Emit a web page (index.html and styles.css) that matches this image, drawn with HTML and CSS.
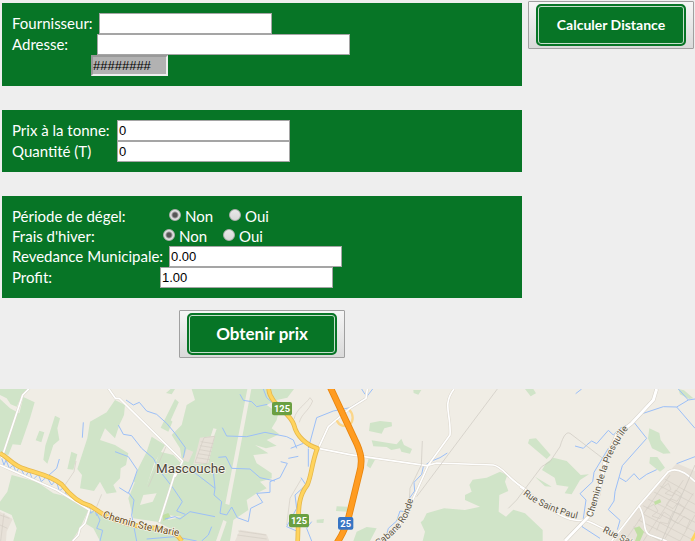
FILE: index.html
```html
<!DOCTYPE html>
<html lang="fr">
<head>
<meta charset="utf-8">
<meta name="viewport" content="width=device-width, initial-scale=1">
<title>Calcul du prix</title>
<link rel="stylesheet" href="styles.css">
</head>
<body>
<form class="page">
  <div class="sections">
    <section class="panel">
      <div class="row"><label class="w-m" for="fournisseur">Fournisseur:</label><input class="field" id="fournisseur" type="text"></div>
      <div class="row"><label class="w-s" for="adresse">Adresse:</label><input class="field field-wide" id="adresse" type="text"></div>
      <div class="row"><span class="w-xs"></span><input class="field field-disabled" type="text" value="########" aria-label="Distance" disabled></div>
    </section>
    <section class="panel">
      <div class="row"><label class="w-l" for="prix">Prix à la tonne:</label><input class="field" id="prix" type="text" value="0"></div>
      <div class="row"><label class="w-l" for="quantite">Quantité (T)</label><input class="field" id="quantite" type="text" value="0"></div>
    </section>
    <section class="panel">
      <div class="row choices"><span class="w-xxl">Période de dégel:</span>
        <label><input type="radio" name="degel" checked>Non</label><label><input type="radio" name="degel">Oui</label></div>
      <div class="row choices"><span class="w-radio">Frais d'hiver:</span>
        <label><input type="radio" name="hiver" checked>Non</label><label><input type="radio" name="hiver">Oui</label></div>
      <div class="row"><label class="w-xxl" for="redevance">Revedance Municipale:</label><input class="field" id="redevance" type="text" value="0.00"></div>
      <div class="row"><label class="w-xl" for="profit">Profit:</label><input class="field" id="profit" type="text" value="1.00"></div>
    </section>
    <button class="action action-large" type="button"><span>Obtenir prix</span></button>
  </div>
  <button class="action" type="button"><span>Calculer Distance</span></button>
</form>
<div class="map">
<svg viewBox="0 12 2085 456" preserveAspectRatio="xMinYMin slice" role="img" aria-label="Carte de Mascouche">
  <rect class="land" y="0" width="2085" height="480"/>
  <g class="wood">
    <path d="M0 12H85L62 40 50 65 32 58 20 40 0 30ZM0 42L30 70 58 85 70 36 104 52 90 100 76 140 62 180 38 178 25 210 0 204Z"/>
    <path d="M165 92L180 100 172 130 178 165 160 180 142 236 130 224 136 182 150 140ZM118 137L133 142 124 172 107 166ZM214 200L232 208 220 254 202 252Z"/>
    <path d="M270 110L320 82 345 45 375 60 372 90 358 120 345 160 315 130 300 165 345 180 385 205 378 240 362 250 360 280 340 300 350 322 320 326 300 290 282 318 240 310 246 270 232 252 262 160Z"/>
    <path d="M512 12H525L515 28 498 24ZM525 42L540 55 505 140 482 128ZM455 155L495 180 462 236 440 304 400 290 415 250 440 200Z"/>
    <path d="M35 270L110 290 160 325 205 336 265 375 240 430 215 468H40L50 430 35 390 0 374V350L22 320Z"/>
    <path d="M268 375L330 400 400 420 470 435 520 450 540 468H300L280 430 255 415Z"/>
    <path d="M575 12H882L862 38 830 45 800 60 835 85 830 105 815 130 838 148 800 165 830 182 798 190 765 180 805 205 760 210 770 235 815 265 815 280 780 290 800 310 770 325 740 345 745 375 700 405 690 468H540L520 435 470 410 400 400 385 340 405 290 440 300 480 200 520 210 548 240 540 190 515 150 545 120 560 60 585 45Z"/>
    <path d="M1250 0"/>
  </g>
  <g class="wood" transform="translate(1050)">
    <path d="M190 15H214L205 29 191 24ZM60 114L90 108 125 112 126 124 103 130 95 146 57 138ZM65 166L116 174 140 178 154 161 162 180 186 192 180 206 154 200 150 190 124 195 110 186 70 184ZM56 220L75 224 61 250 50 242ZM-40 364L-8 365V380L-42 378ZM-100 404L-78 402-80 414-100 413Z"/>
    <path d="M368 284L410 278 450 260 472 270 465 290 475 318 448 330 446 380 468 395 490 374 525 385 578 435V468H218L225 440 212 412 220 405 230 385 282 370 345 375 390 365 345 345 345 330 365 320 358 300ZM10 468L20 440 50 426 80 430 60 468Z"/>
  </g>
  <g class="wood" transform="translate(1560)">
    <path d="M15 12H40L48 25 32 34ZM475 12L492 16 520 40 508 42 480 28ZM28 162L48 160 92 210 80 222 24 175ZM78 235L100 218 140 228 182 270 207 268 180 285 155 328 134 325 146 305 110 300 104 278 66 255ZM45 275L95 305 75 304ZM388 130L418 144 422 165 452 205 430 206 396 190 384 160ZM390 216L412 216 435 248 420 260 388 235Z"/>
  </g>
  <g class="clearing">
    <path d="M742 12H754L688 360 676 356ZM640 130L650 132 632 180 624 178ZM538 48L548 52 520 112 512 106ZM430 330L470 325 458 350 420 360ZM500 390L545 395 505 405ZM670 405L680 410 660 468H648Z"/>
  </g>
  <g class="town">
    <path d="M600 158L645 152 625 235 580 238ZM560 192L580 200 565 232 548 225ZM0 380L38 402 20 440 18 468H0ZM720 434L800 448 808 468H705Z"/>
    <path d="M1845 468L1920 360 2012 255 2030 235 2085 258V468Z"/>
  </g>
  <g class="streets">
    <path d="M602 170L640 176M600 182L638 188M598 194L635 200M594 206L632 212M590 218L630 224M612 158L585 232 620 236 644 154ZM0 390L28 400M0 420L22 430M12 385L2 468M715 438L798 450M712 450L800 462M882 102C890 70 915 60 930 38L938 48C925 80 905 85 898 112"/>
    <path d="M498 185L445 305M305 328L290 365M228 228L222 260 195 300M905 280L870 340 860 420"/>
  </g>
  <clipPath id="suburb"><path d="M1850 468L1925 365 2015 260 2085 268V468Z"/></clipPath>
  <g class="streets" clip-path="url(#suburb)">
    <path d="M1990 280L2080 330M1975 300L2085 358M1960 320L2085 384M1940 340L2085 412M1925 360L2085 440M1920 382L2085 468M1915 405L2040 468M1900 425L1980 468"/>
    <path d="M2010 270L1880 460M2050 285L1930 468M2080 325L1990 468M2085 390L2040 468"/>
    <path d="M1985 310l20-15 8 18-18 12 22 8 10-18 18 12-14 22-20-8-12 18 20 12 15-18 20 15-12 20-22-8-10 20 24 16 18-22 18 12-12 28M1940 370l22-12 12 20-18 15 24 8 12-20 20 14-8 22-24-6-10 25"/>
  </g>
  <path class="park" d="M1962 350L1980 342 1984 352 1965 360ZM1902 430L1918 424 1932 440 1920 468H1905L1912 450ZM488 390L505 384 512 395 490 408Z"/>
  <g class="river">
    <path d="M378 45L400 60 418 52 440 78 470 88 500 115 525 145 556 188 550 218M355 120L370 148 395 152 425 190 460 220 485 265 520 310 547 350 530 378 556 388M345 200L385 215 412 255 400 290 385 325 358 308M385 322L402 345 395 390 410 468M247 158L250 112M178 222L170 250 145 272M290 385L300 405 290 430 308 436 300 468M440 462L525 455 590 468M495 402L525 395 540 402 570 380 645 395"/>
    <path class="creek" d="M5 220L12 240 18 225 28 250 40 240 48 262 60 245 75 275 88 258 98 285 115 268 124 290 140 275 155 300 168 285 178 318 195 304 198 330M245 355L260 370 268 360 272 385 285 375 290 392"/>
    <path d="M720 28L730 46 755 50 770 65 802 58M790 12L800 38 825 60M667 128L680 153 740 155 795 142 860 155 880 165 890 190M655 217L678 215 695 250 750 252 780 278 825 288M580 260L645 310 642 330 665 350 660 385 680 390 695 366 712 398 745 410 752 370 788 352 770 325 810 322 810 290 840 278 862 235 842 230M640 260L645 310M635 425L625 450 605 468M865 220L895 214M903 278L918 300 885 330 890 370 860 425 890 438M935 410L920 430 935 468M872 190L910 175M925 192L925 245M925 190L950 98 1000 78 1050 68"/>
  </g>
  <g class="river" transform="translate(1050)">
    <path d="M0 68L48 38 68 12M35 12L45 28M292 204L270 218 240 230 220 245 215 268 192 292 194 318 178 340 165 380 150 378 140 408 115 430 108 455 88 468"/>
  </g>
  <g class="river" transform="translate(1560)">
    <path d="M167 26L185 12M475 12L505 45 525 42M370 85L430 65 470 66 525 130M470 66L505 45M165 183L190 190 200 180 215 168 230 176 265 136 280 150 300 130 342 112 380 160 307 242 285 320 282 348 265 374 300 406 292 434M298 278L318 290 342 266 358 284 380 268 410 254M265 190L222 262 218 290 180 326 198 345 190 400 186 425 240 460M470 236L525 215"/>
  </g>
  <g class="minor-edge">
    <path d="M88 10L68 30 5 220M325 10L346 40 358 40 525 205M0 240L170 315 268 375 255 415 240 430 235 450 218 468M525 265L478 412M525 205L548 228 525 275M955 190L985 125 1050 70 1098 40 1102 12M955 190L1050 209 1280 242 1310 234 1480 240C1510 245 1520 280 1580 315M1362 12C1325 60 1355 90 1350 150L1285 240 1240 340C1220 400 1190 435 1145 468"/>
    <path d="M1560 305C1640 360 1690 415 1750 405 1790 415 1805 435 1840 440M1835 468L1915 365 2005 260C2030 245 2060 265 2085 290M1918 365C1940 400 1925 440 1950 450L2000 468"/>
  </g>
  <g class="minor">
    <path d="M88 10L68 30 5 220M325 10L346 40 358 40 525 205M0 240L170 315 268 375 255 415 240 430 235 450 218 468M525 265L478 412M525 205L548 228 525 275M955 190L985 125 1050 70 1098 40 1102 12M955 190L1050 209 1280 242 1310 234 1480 240C1510 245 1520 280 1580 315M1362 12C1325 60 1355 90 1350 150L1285 240 1240 340C1220 400 1190 435 1145 468"/>
    <path d="M1560 305C1640 360 1690 415 1750 405 1790 415 1805 435 1840 440M1835 468L1915 365 2005 260C2030 245 2060 265 2085 290M1918 365C1940 400 1925 440 1950 450L2000 468"/>
  </g>
  <path class="avenue-edge" d="M1970 12L1960 45 1895 115 1850 150 1815 230 1795 330 1765 395 1695 468"/>
  <path class="avenue" d="M1970 12L1960 45 1895 115 1850 150 1815 230 1795 330 1765 395 1695 468"/>
  <g class="rail">
    <path d="M1492 12L1250 335M1267 168L1264 240 1230 310 1228 345M1565 325L1625 245 1650 230 1680 185C1690 150 1700 140 1710 145L1815 225M1565 325L1550 345 1525 370M2085 240L1985 468"/>
  </g>
  <g class="major-edge"><path d="M0 205C30 220 35 240 75 252 110 265 150 270 185 298 210 330 240 355 270 362L310 388C350 410 400 425 470 430 520 440 535 450 545 468"/><path d="M806 12C810 60 870 80 882 120 890 155 920 180 952 190 935 235 935 270 922 300 890 340 897 380 893 468"/></g>
  <g class="major"><path d="M0 205C30 220 35 240 75 252 110 265 150 270 185 298 210 330 240 355 270 362L310 388C350 410 400 425 470 430 520 440 535 450 545 468"/><path d="M806 12C810 60 870 80 882 120 890 155 920 180 952 190 935 235 935 270 922 300 890 340 897 380 893 468"/><path d="M2090 440L2075 468"/></g>
  <path class="ramp" d="M1010 106C1020 125 1035 125 1042 118M1048 75C1062 88 1060 110 1050 118"/>
  <path class="highway-edge" d="M990 5L1065 165C1085 205 1088 230 1078 265L1050 380Q1040 430 1010 475"/>
  <path class="highway" d="M990 5L1065 165C1085 205 1088 230 1078 265L1050 380Q1040 430 1010 475"/>
  <g class="shield">
    <rect class="route" x="816" y="51" width="60" height="40" rx="6"/><text x="846" y="81">125</text>
    <rect class="route" x="867" y="387" width="60" height="40" rx="6"/><text x="897" y="417">125</text>
    <rect class="auto" x="1014" y="396" width="46" height="38" rx="6"/><text x="1037" y="425">25</text>
  </g>
  <path id="road-marie" class="guide" d="M307 397Q430 440 570 458"/>
  <path id="road-paul" class="guide" d="M1568 328Q1640 385 1760 408"/>
  <path id="road-presquile" class="guide" d="M1777 398C1810 300 1820 205 1890 125"/>
  <path id="road-ronde" class="guide" d="M1134 484C1200 440 1232 400 1243 325"/>
  <path id="road-south" class="guide" d="M1807 440L1950 510"/>
  <g class="names">
    <text class="city" x="468" y="263">Mascouche</text>
    <text class="road-main"><textPath href="#road-marie">Chemin Ste Marie</textPath></text>
    <text><textPath href="#road-paul">Rue Saint Paul</textPath></text>
    <text><textPath href="#road-presquile">Chemin de la Presqu'île</textPath></text>
    <text><textPath href="#road-ronde">Cabane Ronde</textPath></text>
    <text><textPath href="#road-south">Rue Saint</textPath></text>
  </g>
</svg>
</div>
</body>
</html>
```

FILE: styles.css
```css
* { box-sizing: border-box; }
body {
  margin: 0;
  min-height: 100vh;
  display: flex;
  flex-direction: column;
  background: #eee;
  color: #fff;
  font: 15px/20px Lato, sans-serif;
}
.page {
  display: grid;
  grid-template-columns: minmax(0, 1fr) auto;
  align-items: start;
  gap: 6px;
  padding: 1px 1px 31px 2px;
}
.sections { display: flex; flex-direction: column; gap: 24px; padding-top: 2px; }
.panel { background: #077526; padding: 10px; }
.row { display: flex; align-items: flex-start; white-space: nowrap; }
.w-xs { width: 79px; }
.w-s { width: 85px; }
.w-m { width: 87px; }
.w-l { width: 105px; }
.w-xl { width: 148px; }
.w-radio { width: 151px; }
.w-xxl { width: 157px; }
.row > [class^="w-"] { flex: none; }
.field {
  width: 173px;
  height: 21px;
  min-width: 0;
  padding: 1px;
  border: 1px solid #a5a5a5;
  border-radius: 0;
  background: #fff;
  color: #000;
  font: 13px/15px "Liberation Sans", sans-serif;
}
.field-wide { width: 253px; }
.field-disabled {
  width: 77px;
  padding: 0;
  border: 2px solid;
  border-color: #999 #eee #eee #999;
  background: #b2b2b2;
}
.choices label { display: flex; align-items: center; gap: 4px; margin-right: 16px; }
input[type="radio"] {
  appearance: none;
  width: 12px;
  height: 12px;
  margin: 0 0 2px;
  border: 1px solid #b0b0b0;
  border-radius: 50%;
  background: linear-gradient(#e8e8e8, #d8d8d8);
}
input[type="radio"]:checked { background: radial-gradient(circle, #555 0 2px, #e2e2e2 4px); }
.action {
  width: 166px;
  height: 48px;
  padding: 2px 7px;
  border: 1px solid #a0a0a0;
  border-radius: 1px;
  background: linear-gradient(#f6f6f6, #dadada);
  color: #fff;
  font: bold 14px/18px Lato, sans-serif;
}
.action span {
  display: grid;
  place-items: center;
  height: 42px;
  border: 2px solid #077526;
  border-radius: 5px;
  background: #077526;
  box-shadow: inset 0 0 0 1px #c5dfcc;
}
.action-large { align-self: center; margin-top: -12px; font-size: 17px; }
.map { flex: 1; min-height: 152px; overflow: hidden; position: relative; }
.map svg { position: absolute; width: 100%; height: 100%; }
.map path { fill: none; stroke-linejoin: round; }
.land { fill: #f0ede5; }
.map .wood path { fill: #d0e4c8; }
.map .clearing path { fill: #f0ede5; }
.map .town path { fill: #e7e1d8; }
.map .park { fill: #c0dfa3; }
.streets { stroke: #d3cdc4; stroke-width: 2px; }
.river { stroke: #9bbff8; stroke-width: 3px; }
.minor-edge { stroke: #dcd7cd; stroke-width: 8px; }
.minor { stroke: #fff; stroke-width: 5px; }
.avenue-edge { stroke: #d5d0c7; stroke-width: 12px; }
.avenue { stroke: #fff; stroke-width: 9px; }
.rail { stroke: #cbc7c0; stroke-width: 2px; }
.major-edge { stroke: #e6b84c; stroke-width: 14px; }
.major { stroke: #ffd45e; stroke-width: 9px; }
.ramp { stroke: #fbd68a; stroke-width: 7px; }
.highway-edge { stroke: #e8850e; stroke-width: 20px; }
.highway { stroke: #ff9c21; stroke-width: 15px; }
.shield { fill: #fff; font: bold 28px Roboto, sans-serif; text-anchor: middle; }
.route { fill: #6a9f42; }
.auto { fill: #3875c4; }
.names {
  fill: #5b5446;
  stroke: #f5f2ea;
  stroke-width: 5px;
  stroke-linejoin: round;
  paint-order: stroke;
  font: 28px Roboto, sans-serif;
}
.names .city { fill: #4b4638; font-size: 40px; }
.names .road-main { fill: #6b4c18; font-size: 30px; }
.map .guide { stroke: none; }
```
